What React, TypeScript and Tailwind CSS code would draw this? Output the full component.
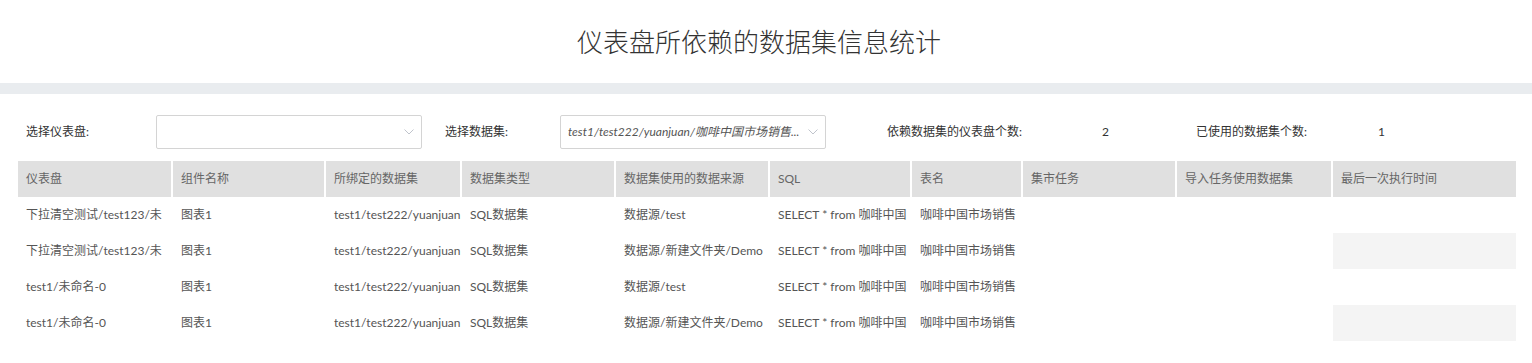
import { ReactNode } from 'react'

const font = 'font-["Segoe_UI","Lato","Noto_Sans_CJK_SC",sans-serif]'

const cols = 'grid grid-cols-[155px_153px_136px_154px_154px_142px_111px_154px_156px_183px]'

const columns = [
  '仪表盘',
  '组件名称',
  '所绑定的数据集',
  '数据集类型',
  '数据集使用的数据来源',
  'SQL',
  '表名',
  '集市任务',
  '导入任务使用数据集',
  '最后一次执行时间',
]

const rows = [
  ['下拉清空测试/test123/未', '图表1', 'test1/test222/yuanjuan', 'SQL数据集', '数据源/test', 'SELECT * from 咖啡中国', '咖啡中国市场销售', '', '', ''],
  ['下拉清空测试/test123/未', '图表1', 'test1/test222/yuanjuan', 'SQL数据集', '数据源/新建文件夹/Demo', 'SELECT * from 咖啡中国', '咖啡中国市场销售', '', '', ''],
  ['test1/未命名-0', '图表1', 'test1/test222/yuanjuan', 'SQL数据集', '数据源/test', 'SELECT * from 咖啡中国', '咖啡中国市场销售', '', '', ''],
  ['test1/未命名-0', '图表1', 'test1/test222/yuanjuan', 'SQL数据集', '数据源/新建文件夹/Demo', 'SELECT * from 咖啡中国', '咖啡中国市场销售', '', '', ''],
]

function Chevron() {
  return (
    <svg width="10" height="6" viewBox="0 0 10 6" className="shrink-0">
      <polyline points="0.5,0.5 5,5 9.5,0.5" fill="none" stroke="#c0c4cc" strokeWidth="1" />
    </svg>
  )
}

function Select({ children }: { children?: ReactNode }) {
  return (
    <div className="w-[266px] h-[34px] border border-[#d4d4d4] rounded-[2px] bg-white flex items-center pl-[7px] pr-[7px] gap-2">
      <div className="flex-1 min-w-0 truncate italic text-[12px] text-[#555]">{children}</div>
      <Chevron />
    </div>
  )
}

export default function App() {
  return (
    <div className={`${font} bg-white w-[1532px] h-[363px] overflow-hidden text-[#555]`}>
      <div className="h-[83px] flex items-center justify-center pt-[1px] pr-[14px]">
        <h1 className="text-[26px] text-[#333] font-light">仪表盘所依赖的数据集信息统计</h1>
      </div>
      <div className="h-[11px] bg-[#e9ecef]" />

      <div className="pl-[18px] pr-[16px]">
        <div className="flex items-center h-[34px] mt-[21px] text-[12px] text-[#333]">
          <div className="w-[138px] pl-[8px]">选择仪表盘:</div>
          <Select />
          <div className="w-[138px] pl-[23px]">选择数据集:</div>
          <Select>test1/test222/yuanjuan/咖啡中国市场销售...</Select>
          <div className="w-[276px] pl-[61px]">依赖数据集的仪表盘个数:</div>
          <div className="w-[94px]">2</div>
          <div className="w-[182px]">已使用的数据集个数:</div>
          <div>1</div>
        </div>

        <div className="mt-[12px] text-[12px]">
          <div className={cols}>
            {columns.map((c, i) => (
              <div
                key={c}
                className={`h-[36px] flex items-center pl-[8px] bg-[#e0e0e0] text-[#666] ${i < columns.length - 1 ? 'border-r-2 border-white' : ''}`}
              >
                {c}
              </div>
            ))}
          </div>
          {rows.map((r, ri) => (
            <div key={ri} className={cols}>
              {r.map((v, ci) => (
                <div
                  key={ci}
                  className={`h-[36px] leading-[36px] pl-[8px] whitespace-nowrap ${
                    ci === 9 && ri % 2 === 1 ? 'bg-[#f4f4f4]' : ''
                  }`}
                >
                  {v}
                </div>
              ))}
            </div>
          ))}
        </div>
      </div>
    </div>
  )
}
